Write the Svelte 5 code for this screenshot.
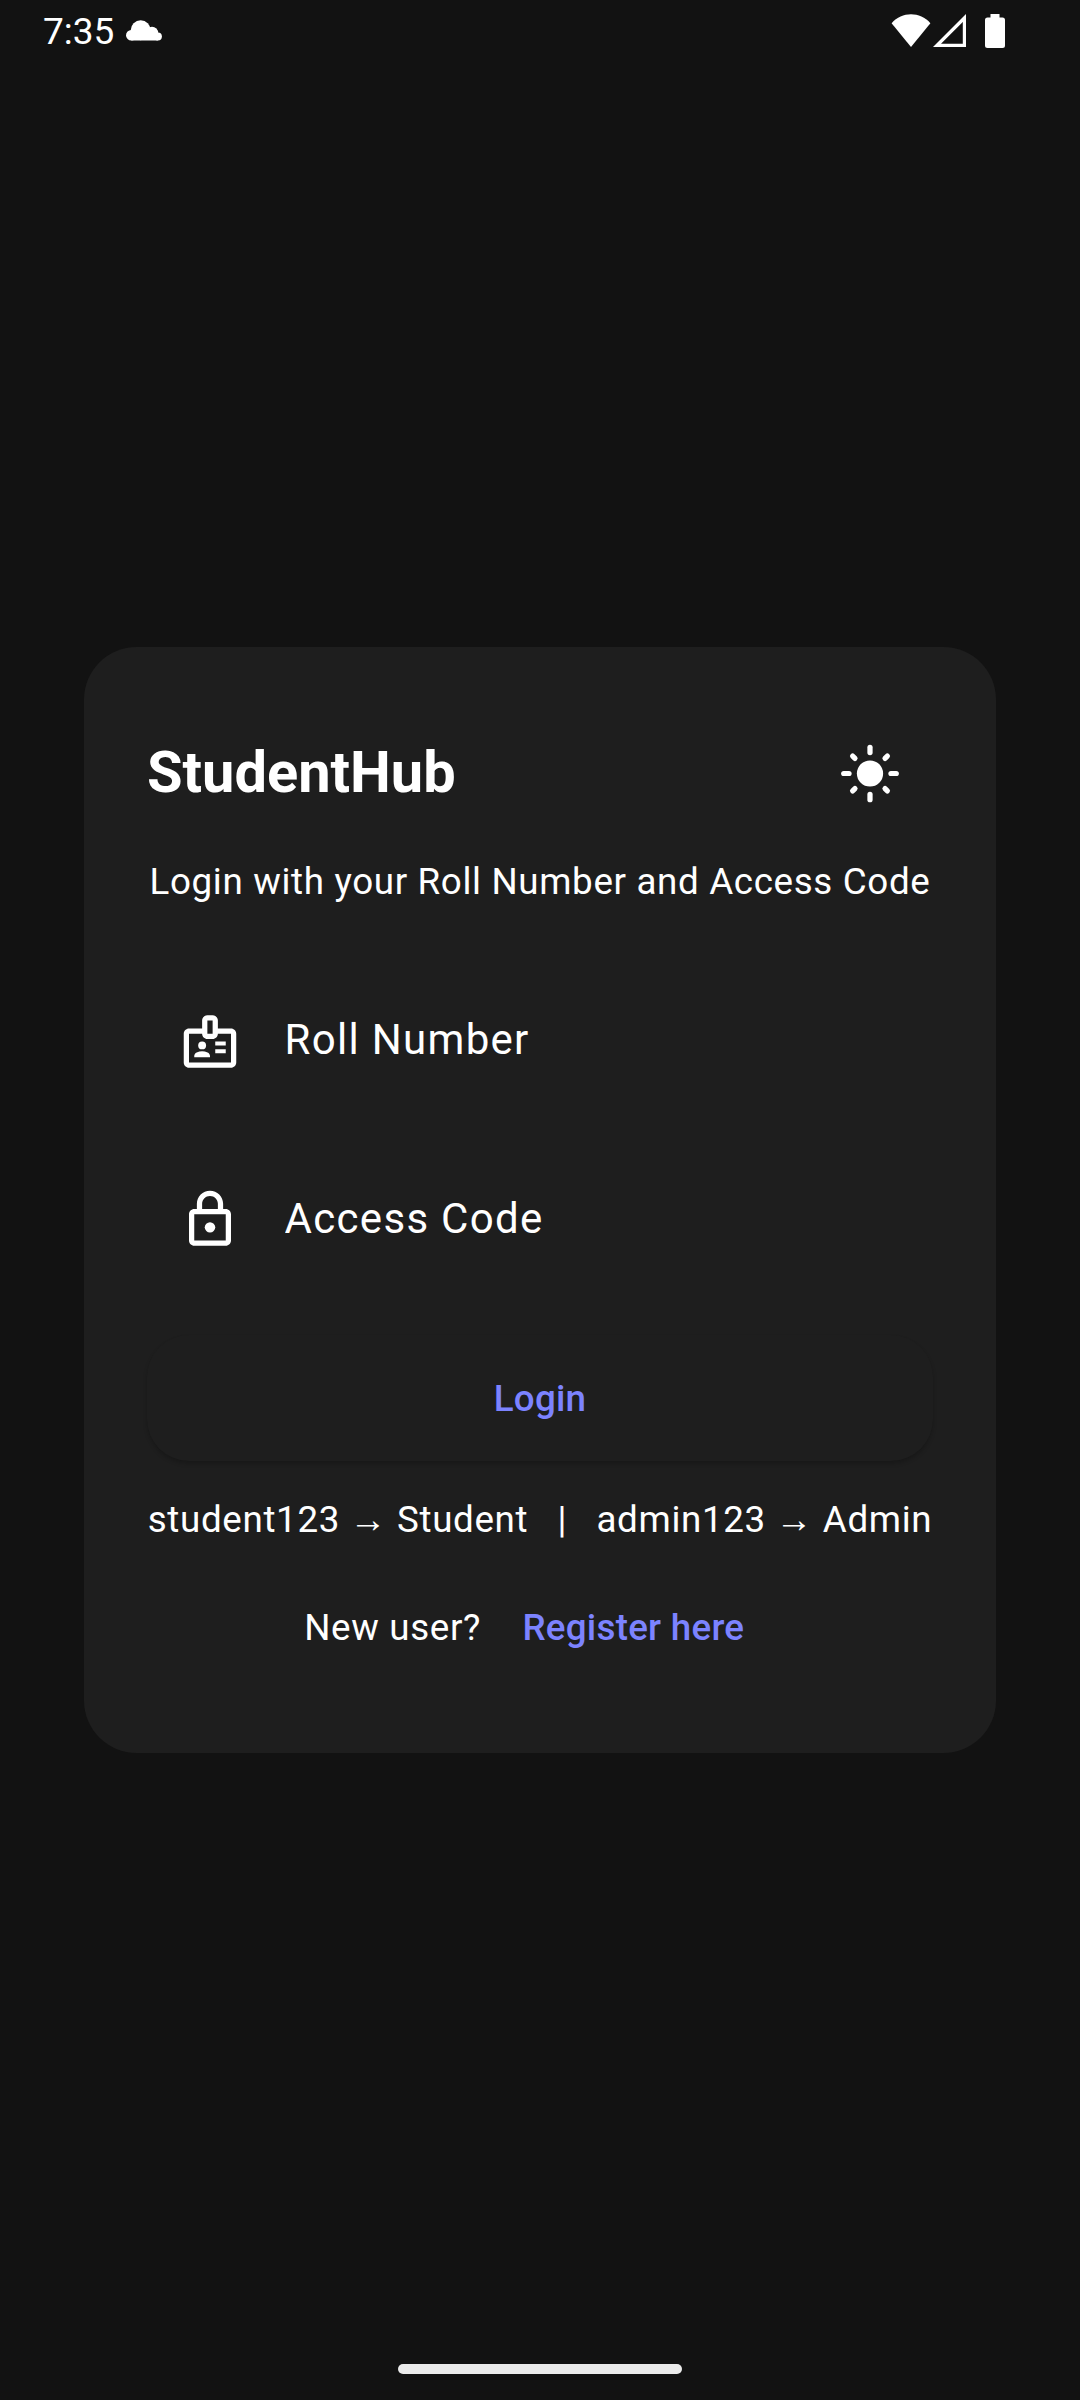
<script>
  let rollNumber = $state('');
  let accessCode = $state('');
  const rays = [0, 90, 180, 270];
  const diagonals = [45, 135, 225, 315];
</script>

<div class="screen">
  <header class="status">
    <div class="left">
      <span class="time">7:35</span>
      <svg class="cloud" width="38" height="21" viewBox="0 0 38 21" aria-hidden="true">
        <circle cx="15.7" cy="10.3" r="10" />
        <circle cx="27" cy="13" r="6.2" />
        <circle cx="6.3" cy="15.3" r="5.3" />
        <circle cx="32.9" cy="16.6" r="4" />
        <path d="M6.3 10h21l5.600 4v6.600H6.300z" />
      </svg>
    </div>
    <div class="right">
      <svg width="40" height="34" viewBox="0 0 40 34" aria-hidden="true">
        <path d="M.6 9.2C11 -2.6 29 -2.6 39.4 9.2L20 33z" />
      </svg>
      <svg class="signal" width="34" height="34" viewBox="0 0 34 34" aria-hidden="true">
        <path fill-rule="evenodd" d="M33 0v33H0zM29.8 8L8 29.8h21.8z" />
      </svg>
      <svg class="battery" width="20" height="34" viewBox="0 0 20 34" aria-hidden="true">
        <path d="M5.5 0h9v3.5h3A2.5 2.5 0 0 1 20 6v25.500a2.500 2.500 0 0 1-2.500 2.500h-15A2.500 2.500 0 0 1 0 31.500V6a2.500 2.500 0 0 1 2.500-2.500h3z" />
      </svg>
    </div>
  </header>

  <main>
    <section class="card">
      <div class="title-row">
        <h1>StudentHub</h1>
        <button class="icon-button" aria-label="Toggle theme">
          <svg width="64" height="63" viewBox="-0.19 0 24.381 24">
            <circle cx="12" cy="12" r="5" />
            <g class="rays">
              {#each rays as angle}
                <path d="M12 2v2" transform="rotate({angle} 12 12)" />
              {/each}
              {#each diagonals as angle}
                <path d="M12 2.650v1.250" transform="rotate({angle} 12 12)" />
              {/each}
            </g>
          </svg>
        </button>
      </div>

      <p class="subtitle">Login with your Roll Number and Access Code</p>

      <label class="field">
        <span class="prefix">
          <svg width="64" height="63" viewBox="-0.19 0 24.381 24" aria-hidden="true">
            <path fill-rule="evenodd" d="M20 7h-5V4c0-1.100-.9-2-2-2h-2c-1.100 0-2 .9-2 2v3H4c-1.100 0-2 .9-2 2v11c0 1.100.9 2 2 2h16c1.100 0 2-.9 2-2V9c0-1.100-.9-2-2-2zM11 4h2v5h-2zM20 20H4V9h5c0 1.100.9 2 2 2h2c1.100 0 2-.9 2-2h5z" />
            <circle cx="9" cy="13.5" r="1.5" />
            <path d="M11.080 16.180a5.200 5.200 0 0 0-4.160 0C6.360 16.420 6 16.960 6 17.570V18h6v-.43c0-.61-.36-1.150-.92-1.390zM14 12h4v1.500h-4zM14 15h4v1.500h-4z" />
          </svg>
        </span>
        <input placeholder="Roll Number" bind:value={rollNumber} />
      </label>

      <label class="field">
        <span class="prefix">
          <svg width="64" height="63" viewBox="-0.19 0 24.381 24" aria-hidden="true">
            <path fill-rule="evenodd" d="M18 8h-1V6c0-2.760-2.240-5-5-5S7 3.240 7 6v2H6c-1.100 0-2 .9-2 2v10c0 1.100.9 2 2 2h12c1.100 0 2-.9 2-2V10c0-1.100-.9-2-2-2zM9 6c0-1.660 1.340-3 3-3s3 1.340 3 3v2H9zM18 20H6V10h12z" />
            <circle cx="12" cy="15" r="2" />
          </svg>
        </span>
        <input placeholder="Access Code" bind:value={accessCode} />
      </label>

      <button class="login">Login</button>

      <p class="hint">student123 → Student&nbsp;&nbsp; | &nbsp;&nbsp;admin123 → Admin</p>

      <div class="register">
        <span>New user?&nbsp;</span>
        <button class="text-button">Register here</button>
      </div>
    </section>
  </main>

  <footer><span class="handle"></span></footer>
</div>

<style>
  :global(body) {
    margin: 0;
    background: #121212;
  }
  .screen {
    width: 1080px;
    height: 2400px;
    display: flex;
    flex-direction: column;
    background: #121212;
    color: #fff;
    font-family: Roboto, 'Liberation Serif', sans-serif;
    font-size: 36.75px;
    letter-spacing: 0.656px;
  }
  svg {
    display: block;
    fill: currentColor;
  }
  button {
    border: 0;
    padding: 0;
    background: none;
    color: inherit;
    font: inherit;
  }
  p,
  h1 {
    margin: 0;
  }
  .status {
    height: 63px;
    flex: none;
    display: flex;
    justify-content: space-between;
    box-sizing: border-box;
    padding: 0 75px 0 43px;
  }
  .left,
  .right {
    display: flex;
  }
  .time {
    font-size: 37px;
    line-height: 63px;
    letter-spacing: 0;
  }
  .cloud {
    margin: 20px 0 0 10.7px;
  }
  .right {
    padding-top: 14px;
  }
  .signal {
    margin-left: 2px;
  }
  .battery {
    margin-left: 18px;
  }
  main {
    flex: 1;
    padding: 584px 84px 0;
  }
  .card {
    height: 1106px;
    box-sizing: border-box;
    padding: 63px;
    border-radius: 52.5px;
    background: #1e1e1e;
    display: flex;
    flex-direction: column;
  }
  .title-row {
    height: 126px;
    flex: none;
    display: flex;
    align-items: center;
    justify-content: space-between;
  }
  h1 {
    padding-bottom: 2px;
    font-size: 57.75px;
    line-height: 74px;
    font-weight: 700;
    letter-spacing: 0;
  }
  .icon-button {
    width: 126px;
    height: 126px;
    display: grid;
    place-items: center;
  }
  .rays {
    stroke: currentColor;
    stroke-width: 2;
    stroke-linecap: round;
  }
  .subtitle {
    margin-top: 21px;
    line-height: 49px;
    text-align: center;
    white-space: nowrap;
  }
  .field {
    height: 147px;
    flex: none;
    margin-top: 31.5px;
    display: flex;
    align-items: center;
  }
  .subtitle + .field {
    margin-top: 62px;
  }
  .prefix {
    width: 126px;
    padding-bottom: 1px;
    display: flex;
    justify-content: center;
  }
  input {
    flex: 1;
    min-width: 0;
    height: 60px;
    padding: 0;
    margin: 0 0 3px 11.5px;
    border: 0;
    outline: 0;
    background: none;
    color: #fff;
    font: 42px Roboto, sans-serif;
    letter-spacing: 1.3125px;
  }
  .subtitle + .field input {
    margin-bottom: 4px;
  }
  input::placeholder {
    color: #fff;
    opacity: 1;
  }
  .login {
    height: 126px;
    flex: none;
    margin-top: 41.5px;
    border-radius: 42px;
    background: #1e1e1e;
    box-shadow: 0 3px 4px rgba(0, 0, 0, 0.2);
    color: #7c83ff;
    font-weight: 500;
    letter-spacing: 0.2625px;
  }
  .hint {
    margin-top: 34px;
    height: 49px;
    line-height: 49px;
    text-align: center;
    white-space: nowrap;
  }
  .register {
    height: 126px;
    flex: none;
    margin-top: 20.5px;
    display: flex;
    justify-content: center;
    align-items: center;
  }
  .text-button {
    padding: 0 31.5px;
    color: #7c83ff;
    font-weight: 500;
    letter-spacing: 0.2625px;
  }
  footer {
    height: 36px;
    flex: none;
    display: flex;
    justify-content: center;
  }
  .handle {
    width: 284px;
    height: 10px;
    border-radius: 5px;
    background: #ebebeb;
  }
</style>
